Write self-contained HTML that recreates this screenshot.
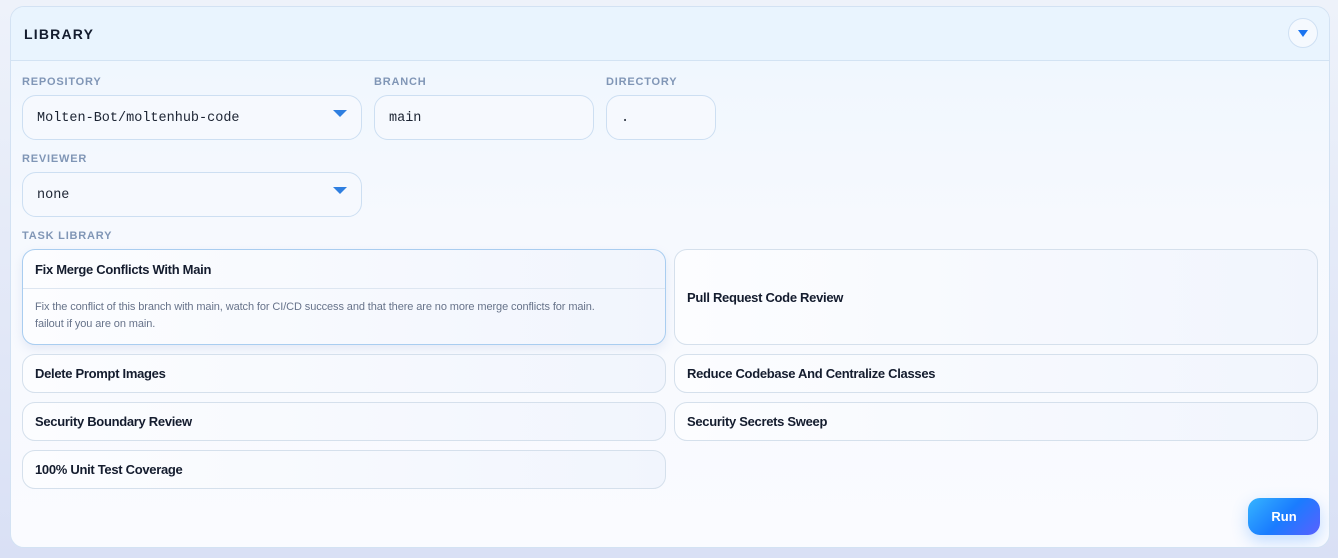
<!DOCTYPE html>
<html><head><style>
*{box-sizing:border-box;margin:0;padding:0}
body{width:1338px;height:558px;background:linear-gradient(180deg,#eef2fa,#d9e0f5);font-family:"Liberation Sans",sans-serif;position:relative;overflow:hidden}
.panel{position:absolute;left:10px;top:6px;width:1320px;height:542px;border-radius:14px;border:1px solid #d3e2f3;background:linear-gradient(180deg,#eef6fe 0%,#f6f9fe 40%,#fafbff 100%);overflow:hidden}
.in{position:absolute;left:-1px;top:-1px;width:1320px;height:542px}
.hdr{height:55px;border-bottom:1px solid #d3e3f3;background:#e9f4fe;position:relative}
.hdr h1{position:absolute;left:14px;top:20px;font-size:14px;font-weight:bold;letter-spacing:1.2px;color:#141c2e}
.tog{position:absolute;right:12px;top:12px;width:30px;height:30px;border-radius:50%;border:1px solid #cfe0f3;background:#f5f9fe}
.tog:after{content:"";position:absolute;left:9px;top:11px;border-left:5px solid transparent;border-right:5px solid transparent;border-top:7px solid #1a74f0}
.lbl{position:absolute;font-size:11px;font-weight:bold;letter-spacing:.8px;color:#8096b6}
.inp{position:absolute;height:45px;border:1px solid #cddff2;border-radius:14px;background:#f6f9fe;font-family:"Liberation Mono",monospace;font-size:13.5px;color:#1c2433;padding:15px 14px 0}
.dd:after{content:"";position:absolute;right:14px;top:14px;border-left:7px solid transparent;border-right:7px solid transparent;border-top:7px solid #2f7fe0}
.card{position:absolute;border:1px solid #d5e0ec;border-radius:13px;background:linear-gradient(90deg,#fcfdff,#f1f5fd);font-size:13px;font-weight:bold;color:#141c2e;letter-spacing:-.3px;padding:0 12px;display:flex;align-items:center}
.run{position:absolute;left:1238px;top:492px;width:72px;height:37px;border-radius:12px;background:linear-gradient(135deg,#36b4ff,#1a7cff 50%,#5a60ff);color:#fff;font-weight:bold;font-size:13px;text-align:center;line-height:37px;box-shadow:0 6px 16px rgba(60,150,255,.3)}
</style></head><body>
<div class="panel"><div class="in">
<div class="hdr"><h1>LIBRARY</h1><div class="tog"></div></div>
<div class="lbl" style="left:12px;top:70px">REPOSITORY</div>
<div class="lbl" style="left:364px;top:70px">BRANCH</div>
<div class="lbl" style="left:596px;top:70px">DIRECTORY</div>
<div class="inp dd" style="left:12px;top:89px;width:340px">Molten-Bot/moltenhub-code</div>
<div class="inp" style="left:364px;top:89px;width:220px">main</div>
<div class="inp" style="left:596px;top:89px;width:110px">.</div>
<div class="lbl" style="left:12px;top:147px">REVIEWER</div>
<div class="inp dd" style="left:12px;top:166px;width:340px">none</div>
<div class="lbl" style="left:12px;top:224px">TASK LIBRARY</div>
<div class="card" style="left:12px;top:243px;width:644px;height:96px;display:block;padding:0;border-color:#a9cdf0;box-shadow:0 4px 10px rgba(150,170,210,.2)">
<div style="height:39px;border-bottom:1px solid #dde6f1;padding:12px 12px 0">Fix Merge Conflicts With Main</div>
<div style="font-weight:normal;font-size:11px;color:#67738a;line-height:17px;padding:10px 40px 0 12px;letter-spacing:-.1px">Fix the conflict of this branch with main, watch for CI/CD success and that there are no more merge conflicts for main. failout if you are on main.</div>
</div>
<div class="card" style="left:664px;top:243px;width:644px;height:96px">Pull Request Code Review</div>
<div class="card" style="left:12px;top:348px;width:644px;height:39px">Delete Prompt Images</div>
<div class="card" style="left:664px;top:348px;width:644px;height:39px">Reduce Codebase And Centralize Classes</div>
<div class="card" style="left:12px;top:396px;width:644px;height:39px">Security Boundary Review</div>
<div class="card" style="left:664px;top:396px;width:644px;height:39px">Security Secrets Sweep</div>
<div class="card" style="left:12px;top:444px;width:644px;height:39px">100% Unit Test Coverage</div>
<div class="run">Run</div>
</div></div>
</body></html>
